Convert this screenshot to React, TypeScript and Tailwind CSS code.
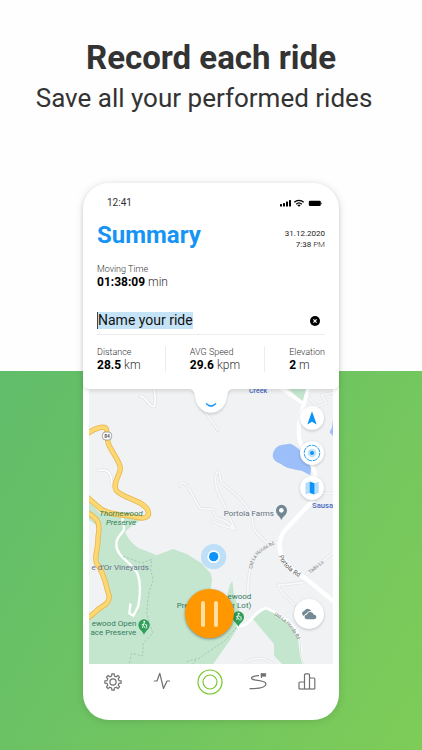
import type { ReactNode } from "react";

const stats = [
  { label: "Distance", value: "28.5", unit: "km" },
  { label: "AVG Speed", value: "29.6", unit: "kpm" },
  { label: "Elevation", value: "2", unit: "m" },
];

function gearPath(teeth: number, outer: number, root: number) {
  const step = (Math.PI * 2) / teeth;
  const at = (r: number, a: number) =>
    `${(10 + r * Math.cos(a)).toFixed(2)} ${(10 + r * Math.sin(a)).toFixed(2)}`;
  const points: string[] = [];
  for (let i = 0; i < teeth; i++) {
    const a = i * step;
    points.push(
      at(root, a - step * 0.29),
      at(outer, a - step * 0.18),
      at(outer, a + step * 0.18),
      at(root, a + step * 0.29),
    );
  }
  return `M${points.join("L")}Z`;
}

function StatusBar() {
  return (
    <div className="flex h-4 items-center justify-between pr-4 pl-6">
      <span className="text-[10px] leading-4 text-[#333333]">12:41</span>
      <svg viewBox="0 0 44 10" className="h-[10px] w-[44px]" fill="#000" aria-hidden="true">
        <rect x="1" y="6" width="2" height="2.5" rx="0.5" />
        <rect x="4" y="5" width="2" height="3.5" rx="0.5" />
        <rect x="7" y="3.5" width="2" height="5" rx="0.5" />
        <rect x="10" y="2" width="2" height="6.5" rx="0.5" />
        <g fill="none" stroke="#000" strokeWidth="1.4">
          <path d="M15.3 4.3C18 1.7 22 1.7 24.7 4.3" />
          <path d="M17.2 6.2C18.8 4.7 21.2 4.7 22.8 6.2" />
        </g>
        <path d="M18.4 7.2Q20 6 21.6 7.2L20 8.8Z" />
        <rect x="29.800" y="2.7" width="12" height="5.4" rx="1.3" />
        <path d="M42.400 4.2Q43.900 5.4 42.400 6.6Z" />
      </svg>
    </div>
  );
}

function TerrainMap() {
  return (
    <svg viewBox="267 117 732 825" className="block h-auto w-full" role="img" aria-label="Ride map">
      <defs>
        <path id="honda-west" d="M757 656C758 625 778 600 840 576" />
        <path id="honda-east" d="M822 795C860 815 878 835 900 885" />
        <path id="portola-rd" d="M837 618C845 645 865 662 915 694" />
        <path id="tadin-ln" d="M930 671L995 621" />
      </defs>
      <rect x="267" y="117" width="732" height="825" fill="#f0f2f4" />

      <g fill="#c4e6cf">
        <path d="M267 455L300 490L430 505L395 528L375 545C385 570 405 590 425 598L470 616L520 597L560 612L605 640L633 672L636 690L630 730L680 740L690 705L697 692L702 735L718 780L712 835L690 870L640 942H267Z" />
        <path d="M758 806L800 773L850 800L893 862L916 942H846L822 917V882Z" />
        <path d="M866 117H925L908 155Z" />
      </g>
      <path d="M267 510L288 525L294 560L286 620L310 665L325 720L322 752L267 795Z" fill="#f0f2f4" />
      <path d="M818 318C820 297 832 286 848 284L870 281C888 286 901 303 918 315L934 346L931 376L905 362C880 358 858 355 843 342C828 337 820 330 818 318Z" fill="#9cbffa" />
      <path d="M999 210L996 232L989 247L999 258Z" fill="#9cbffa" />

      <g fill="none" stroke="#e1e4e7" strokeWidth="9" strokeLinejoin="round" strokeLinecap="round">
        <path d="M538 409C541 392 560 400 567 417L600 475L640 478L645 500L680 515L705 538L660 524L636 513" />
        <path d="M705 538L670 460C650 425 640 390 651 366C664 362 656 384 665 398C690 420 735 450 752 492C764 515 750 530 775 553L800 578L838 578" />
        <path d="M744 735C742 690 750 640 773 607C785 592 800 586 820 580" />
        <path d="M999 608L915 676" />
        <path d="M918 697L832 706L850 732L884 765" />
        <path d="M736 942C752 920 800 920 818 942" />
        <path d="M925 140L950 170L980 160L965 135L999 128" />
        <path d="M940 430H999" />
      </g>
      <g fill="none" stroke="#f8f9fa" strokeWidth="5" strokeLinejoin="round" strokeLinecap="round">
        <path d="M538 409C541 392 560 400 567 417L600 475L640 478L645 500L680 515L705 538L660 524L636 513" />
        <path d="M705 538L670 460C650 425 640 390 651 366C664 362 656 384 665 398C690 420 735 450 752 492C764 515 750 530 775 553L800 578L838 578" />
        <path d="M744 735C742 690 750 640 773 607C785 592 800 586 820 580" />
        <path d="M999 608L915 676" />
        <path d="M918 697L832 706L850 732L884 765" />
        <path d="M736 942C752 920 800 920 818 942" />
        <path d="M925 140L950 170L980 160L965 135L999 128" />
        <path d="M940 430H999" />
        <path d="M600 165L654 241" stroke="#dfe2e5" strokeWidth="9" />
        <path d="M600 165L654 241" />
        <path d="M420 139C440 137 446 172 462 170C469 160 464 145 463 117" stroke="#dfe2e5" strokeWidth="10" />
        <path d="M420 139C440 137 446 172 462 170C469 160 464 145 463 117" stroke="#fff" />
        <path d="M295 361C325 356 335 370 336 402" stroke="#dfe2e5" strokeWidth="9" />
        <path d="M295 361C325 356 335 370 336 402" stroke="#fff" />
      </g>

      <g fill="none" stroke="#fff" strokeLinejoin="round">
        <path d="M840 112L912 162L925 112" strokeWidth="11" />
        <path d="M912 160C900 200 890 240 900 275C912 310 945 345 946 380" strokeWidth="12" />
        <path d="M940 450L855 541C838 560 835 590 843 612C860 655 895 668 925 692L1002 755" strokeWidth="13" />
        <path d="M368 500V520C384 550 350 548 349 582C347 620 395 635 413 672C425 705 419 745 415 768L400 797L388 790L391 763" strokeWidth="7" strokeLinecap="round" />
        <path d="M710 830C755 832 755 785 798 774C835 790 875 815 893 850C908 885 893 895 912 942" strokeWidth="8" />
      </g>
      <path d="M893 850C908 885 893 895 912 942" fill="none" stroke="#c9cdd0" strokeWidth="2" />
      <g fill="none" stroke="#a5c9b1" strokeWidth="3" strokeDasharray="7 5">
        <path d="M369 619L425 639L455 628L452 660L460 690L446 730L440 790L458 850L430 880L428 918L395 910L388 942" />
        <path d="M710 832L672 874L640 895L590 930M560 935L590 926L578 942" />
      </g>

      <g fill="none" stroke="#e9b64f" strokeWidth="16" strokeLinejoin="round">
        <path d="M262 251C285 233 317 225 319 238C325 258 318 272 330 292C345 320 362 338 361 357C358 380 338 397 348 420C365 445 430 450 443 480C452 500 435 508 410 502C380 493 330 498 300 475L262 442" />
        <path d="M262 488C295 505 302 520 294 560C296 600 280 620 290 640C315 672 318 710 328 740C325 770 302 765 285 787L262 805" />
      </g>
      <g fill="none" stroke="#fcd873" strokeWidth="11" strokeLinejoin="round">
        <path d="M262 251C285 233 317 225 319 238C325 258 318 272 330 292C345 320 362 338 361 357C358 380 338 397 348 420C365 445 430 450 443 480C452 500 435 508 410 502C380 493 330 498 300 475L262 442" />
        <path d="M262 488C295 505 302 520 294 560C296 600 280 620 290 640C315 672 318 710 328 740C325 770 302 765 285 787L262 805" />
      </g>
      <rect x="307" y="246" width="28" height="24" rx="10" fill="#fff" stroke="#777" strokeWidth="2" />

      <g fontFamily="Roboto, sans-serif" fontSize="24">
        <text x="321" y="264" fontSize="15" fontWeight="700" fill="#555" textAnchor="middle">84</text>
        <g fill="#358058" textAnchor="middle" fontStyle="italic">
          <text x="363" y="497">Thornewood</text>
          <text x="363" y="525">Preserve</text>
        </g>
        <g fill="#66738c" textAnchor="end">
          <text x="447" y="660">e d’Or Vineyards</text>
          <text x="822" y="497" fill="#66727f">Portola Farms</text>
        </g>
        <g fill="#367a5c" textAnchor="end">
          <text x="409" y="828">ewood Open</text>
          <text x="409" y="855">ace Preserve</text>
          <text x="754" y="748">ewood</text>
          <text x="754" y="775">r Lot)</text>
          <text x="530" y="775" textAnchor="start">Pre</text>
        </g>
        <g fill="#4a6cc0" fontWeight="500">
          <text x="747" y="128" fontSize="21">Creek</text>
          <text x="936" y="473" fontSize="23">Sausa</text>
        </g>
        <text fill="#777" fontSize="14"><textPath href="#honda-west">Old La Honda Rd</textPath></text>
        <text fill="#777" fontSize="14"><textPath href="#honda-east">Old La Honda Rd</textPath></text>
        <text fill="#555" fontSize="19"><textPath href="#portola-rd">Portola Rd</textPath></text>
        <text fill="#777" fontSize="14"><textPath href="#tadin-ln">Tadin Ln</textPath></text>
      </g>

      <path d="M844 511C842 500 828 496 828 481A16.500 16.500 0 0 1 861 481C861 496 847 500 844 511Z" fill="#718794" />
      <circle cx="844" cy="481" r="7" fill="#fff" />
      {[
        [432, 825],
        [715, 801],
      ].map(([x, y]) => (
        <g key={x} transform={`translate(${x} ${y})`}>
          <path d="M0 30C-3 18-17 14-17 0A17 17 0 0 1 17 0C17 14 3 18 0 30Z" fill="#2f9e58" />
          <circle cx="1" cy="-10" r="3" fill="#fff" />
          <path d="M0-5L-5 9M0-4L-7 0M1-4L7 1M-1 2L4 10M8-2V10" fill="none" stroke="#fff" strokeWidth="2.500" />
        </g>
      ))}

      <circle cx="641" cy="620" r="38" fill="#bddff7" />
      <circle cx="641" cy="620" r="19" fill="#fff" />
      <circle cx="641" cy="620" r="14" fill="#0b93fb" />
    </svg>
  );
}

function MapButton({ label, children }: { label: string; children: ReactNode }) {
  return (
    <button
      type="button"
      aria-label={label}
      className="flex size-6 items-center justify-center rounded-full bg-white shadow-[0_1px_3px_rgba(0,0,0,0.2)]"
    >
      {children}
    </button>
  );
}

function MapPanel() {
  return (
    <div className="relative mx-[6px] overflow-hidden">
      <TerrainMap />
      <div className="absolute top-[17px] right-[9px] flex flex-col gap-[11px]">
        <MapButton label="Direction">
          <svg viewBox="0 0 18 18" className="size-[18px]" fill="#0b93fb">
            <path d="M9 2.200L13.700 15.500L9 12.700L4.300 15.500Z" />
          </svg>
        </MapButton>
        <MapButton label="Centre on position">
          <svg viewBox="0 0 18 18" className="size-[18px]">
            <circle cx="9" cy="9" r="7.800" fill="none" stroke="#2a9ff5" strokeWidth="1" strokeDasharray="5.100 1.020" />
            <circle cx="9" cy="9" r="4.300" fill="#bfe1fa" />
            <circle cx="9" cy="9" r="2" fill="#0b93fb" />
          </svg>
        </MapButton>
        <MapButton label="Map style">
          <svg viewBox="0 0 18 18" className="size-[18px]">
            <path d="M2.500 4L6.700 2.800V14L2.500 15.200ZM11.500 4.200L15.700 2.800V13.800L11.500 15.400Z" fill="#b5dcf9" />
            <path d="M6.700 2.600L11.500 4.200V15.400L6.700 13.900Z" fill="#0b93fb" />
          </svg>
        </MapButton>
      </div>
      <button
        type="button"
        aria-label="Weather"
        className="absolute right-[9px] bottom-[35px] flex size-[30px] items-center justify-center rounded-full bg-white shadow-[0_1px_3px_rgba(0,0,0,0.2)]"
      >
        <svg viewBox="0 0 16 12" className="h-3 w-4" fill="#758994">
          <path d="M1.200 6.200Q0.600 3.800 3 3.300Q4.600 0 7.600 0.900Q9.400 1.300 10.200 3Q6.500 2.400 5.400 5.600Q3.500 6 3 8Q1.500 7.500 1.200 6.200Z" />
          <path d="M5.600 11.300Q3.400 11 3.500 8.800Q3.700 6.800 5.900 6.600Q7 3.600 9.700 3.900Q12 4.200 12.600 6.400Q15.300 6.500 15.400 8.900Q15.300 11.300 13 11.300Z" />
        </svg>
      </button>
      <button
        type="button"
        aria-label="Pause recording"
        className="absolute bottom-[26px] left-24 flex size-[49px] items-center justify-center gap-[9px] rounded-full bg-[#ff9800] shadow-[0_1px_3px_rgba(0,0,0,0.4)]"
      >
        <span className="h-[26px] w-1 rounded-full bg-[#ffdda3]" />
        <span className="h-[26px] w-1 rounded-full bg-[#ffdda3]" />
      </button>
    </div>
  );
}

function SummaryPanel() {
  return (
    <section className="relative z-10 h-[206px] rounded-t-[26px] rounded-b-[6px] bg-white pt-3 shadow-[0_2px_4px_rgba(0,0,0,0.12)]">
      <StatusBar />
      <div className="px-[14px]">
        <div className="mt-2 flex items-start justify-between">
          <h2 className="text-[24px] leading-8 font-bold text-[#1594f5]">Summary</h2>
          <p className="pt-[9px] text-right text-[8px] leading-[11px] text-[#222222]">
            31.12.2020
            <br />
            7:38 <span className="font-light">PM</span>
          </p>
        </div>
        <div className="mt-3 leading-[13px]">
          <p className="text-[9px] font-light text-[#333333]">Moving Time</p>
          <p className="text-[12px] font-light text-[#333333]">
            <strong className="font-bold text-black">01:38:09</strong> min
          </p>
        </div>
        <div className="mt-[18px] flex h-7 items-center justify-between border-b border-[#ededed]">
          <input
            aria-label="Ride name"
            defaultValue="Name your ride"
            className="field-sizing-content h-[17px] border-l border-[#444444] bg-[#c5e3f6] text-[14px] leading-[17px] text-[#111111] outline-none"
          />
          <button
            type="button"
            aria-label="Clear name"
            className="mr-[5px] flex size-[10px] items-center justify-center rounded-full bg-black"
          >
            <svg viewBox="0 0 10 10" className="size-[10px]" stroke="#fff" strokeWidth="1.200">
              <path d="M3.400 3.400L6.600 6.600M6.600 3.400L3.400 6.600" />
            </svg>
          </button>
        </div>
        <dl className="mt-[11px] flex justify-between font-light text-[#333333]">
          {stats.map((stat, i) => (
            <div key={stat.label} className="contents">
              {i > 0 && <div className="h-[26px] w-px bg-[#ededed]" />}
              <div className="leading-[13px]">
                <dt className="text-[9px]">{stat.label}</dt>
                <dd className="text-[12px]">
                  <strong className="font-bold text-black">{stat.value}</strong> {stat.unit}
                </dd>
              </div>
            </div>
          ))}
        </dl>
      </div>
      <button
        type="button"
        aria-label="Show less"
        className="absolute top-full left-1/2 -translate-x-1/2 drop-shadow-[0_2px_1px_rgba(0,0,0,0.13)]"
      >
        <svg viewBox="0 0 42 24" className="block h-6 w-[42px]">
          <path d="M0 0C4 1 4.500 4 5 8C6.500 18 13 23.700 21 23.700S35.500 18 37 8C37.500 4 38 1 42 0Z" fill="#fff" />
          <path d="M16 14.500L19 16.500Q21 17.500 23 16.500L26 14.500" fill="none" stroke="#1594f5" strokeWidth="1.500" />
        </svg>
      </button>
    </section>
  );
}

function TabButton({ label, children }: { label: string; children: ReactNode }) {
  return (
    <button type="button" aria-label={label} className="flex h-7 flex-1 items-center justify-center">
      {children}
    </button>
  );
}

function TabBar() {
  const icon = "size-5 fill-none stroke-[#707070] stroke-[1.2]";
  return (
    <nav className="mr-2 ml-1.5 flex h-14 items-start pt-1" aria-label="Main">
      <TabButton label="Settings">
        <svg viewBox="0 0 20 20" className={icon} strokeLinejoin="round">
          <path d={gearPath(8, 8.2, 6.1)} />
          <circle cx="10" cy="10" r="3.100" />
        </svg>
      </TabButton>
      <TabButton label="Activity">
        <svg viewBox="0 0 20 20" className={icon} strokeLinejoin="round">
          <path d="M1.800 9H5L7.800 1.300L11.500 16.500L15 9H18" />
        </svg>
      </TabButton>
      <TabButton label="Record">
        <svg viewBox="0 0 28 28" className="size-7 fill-none stroke-[#77c82c] stroke-[1.2]">
          <circle cx="14" cy="14" r="12" />
          <circle cx="14" cy="14" r="7" />
        </svg>
      </TabButton>
      <TabButton label="Routes">
        <svg viewBox="0 0 20 20" className={icon} strokeLinecap="round">
          <path d="M10.500 3.600C4.500 4 2.500 5.500 4 7C6 9 18 8 18 12C18 15.500 10 16.700 2 16.700" />
          <path d="M13.500 5.500V1.600" />
          <path d="M13.500 1.600H18L17.500 3L18 4.300H13.500Z" fill="#707070" strokeWidth="0.600" />
        </svg>
      </TabButton>
      <TabButton label="Statistics">
        <svg viewBox="0 0 20 20" className={icon} strokeLinejoin="round">
          <path d="M2 17V11Q2 10 3 10H7.500V17M7.500 17V2.800Q7.500 1.800 8.500 1.800H11.500Q12.500 1.800 12.500 2.800V17M12.500 6H16.800Q17.800 6 17.800 7V17" />
          <path d="M2 17H17.800" />
        </svg>
      </TabButton>
    </nav>
  );
}

export default function App() {
  return (
    <main className="relative isolate min-h-screen overflow-hidden bg-[#fefefe] pb-[30px] font-[Roboto,sans-serif]">
      <div className="absolute inset-x-0 top-[371px] bottom-0 -z-10 bg-[linear-gradient(120deg,#61bd6b,#7ecc58)]" />
      <header className="pt-[38px] text-center text-[#333333]">
        <h1 className="text-[33px] leading-10 font-bold">Record each ride</h1>
        <p className="mt-1 pr-3.5 text-[26px] leading-8">Save all your performed rides</p>
      </header>
      <div className="mx-auto mt-[69px] w-full max-w-[256px] rounded-[26px] bg-white shadow-[0_1px_8px_rgba(0,0,0,0.13)]">
        <SummaryPanel />
        <MapPanel />
        <TabBar />
      </div>
    </main>
  );
}
